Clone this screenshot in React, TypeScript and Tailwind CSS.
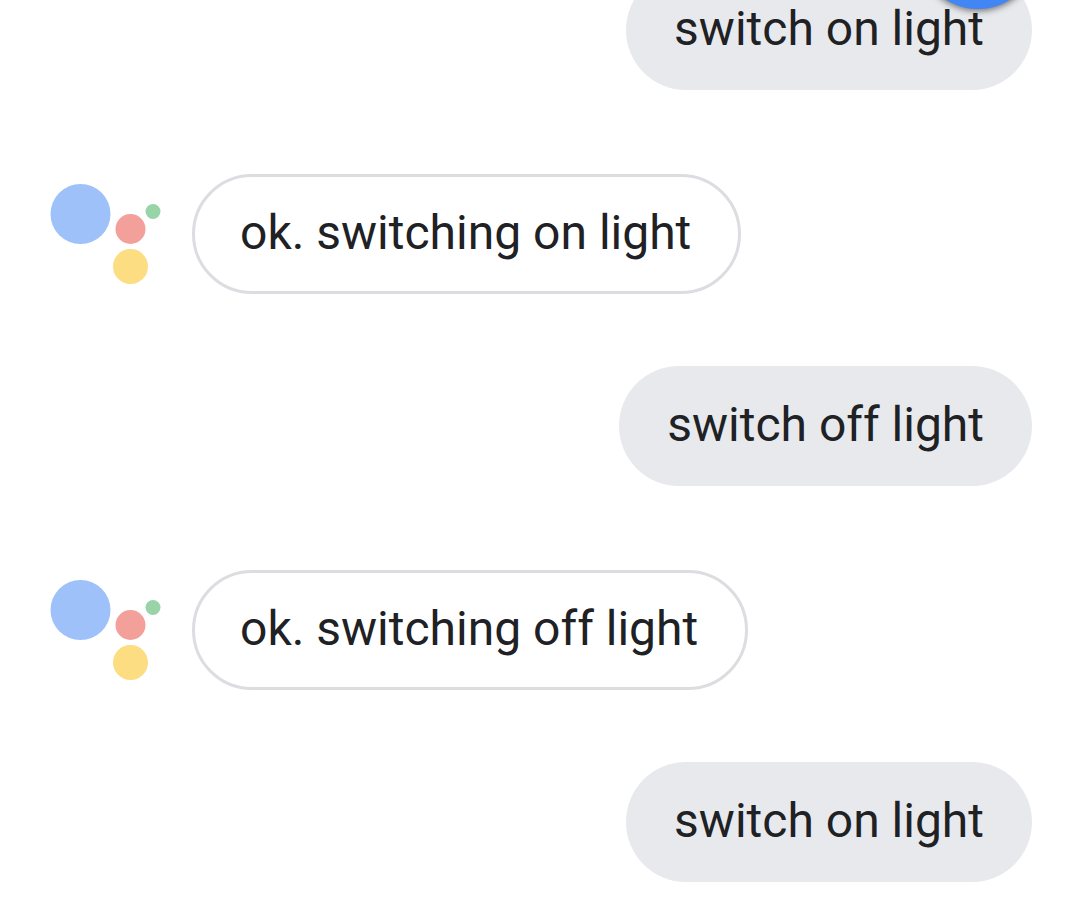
interface Message {
  id: number;
  from: 'user' | 'assistant';
  text: string;
}

const MESSAGES: Message[] = [
  { id: 1, from: 'user', text: 'switch on light' },
  { id: 2, from: 'assistant', text: 'ok. switching on light' },
  { id: 3, from: 'user', text: 'switch off light' },
  { id: 4, from: 'assistant', text: 'ok. switching off light' },
  { id: 5, from: 'user', text: 'switch on light' },
];

function AssistantLogo() {
  return (
    <svg viewBox="0 0 112 104" className="h-[104px] w-28 shrink-0" aria-hidden="true">
      <circle cx="30.5" cy="32" r="30" fill="#9fc1f9" />
      <circle cx="80.5" cy="47" r="15" fill="#f3a09a" />
      <circle cx="103" cy="29.5" r="7.5" fill="#99d4a9" />
      <circle cx="80.5" cy="84.5" r="17.5" fill="#fcdd81" />
    </svg>
  );
}

function UserMessage({ text }: { text: string }) {
  return (
    <div className="flex justify-end">
      <p className="rounded-[60px] bg-[#e8e9ed] px-12 pt-[27px] pb-[29px] leading-16">{text}</p>
    </div>
  );
}

function AssistantMessage({ text }: { text: string }) {
  return (
    <div className="flex items-center gap-[30px] pt-3">
      <AssistantLogo />
      <p className="rounded-[60px] border-3 border-[#dcdde1] pt-6 pr-[47px] pb-[26px] pl-[45px] leading-16">{text}</p>
    </div>
  );
}

export default function App() {
  return (
    <main className="relative h-screen overflow-hidden bg-white font-[Roboto,sans-serif] text-5xl text-[#202124]">
      {/* Mic button, mostly scrolled out at the top */}
      <button
        type="button"
        aria-label="Microphone"
        className="absolute -top-[111px] right-[42px] size-[120px] rounded-full bg-[#4285f4] shadow-[0_2px_6px_rgba(0,0,0,0.5)]"
      />

      {/* Conversation */}
      <div className="-mt-[30px] flex flex-col gap-18 pr-12 pl-[50px]">
        {MESSAGES.map((message) =>
          message.from === 'user' ? (
            <UserMessage key={message.id} text={message.text} />
          ) : (
            <AssistantMessage key={message.id} text={message.text} />
          )
        )}
      </div>
    </main>
  );
}
